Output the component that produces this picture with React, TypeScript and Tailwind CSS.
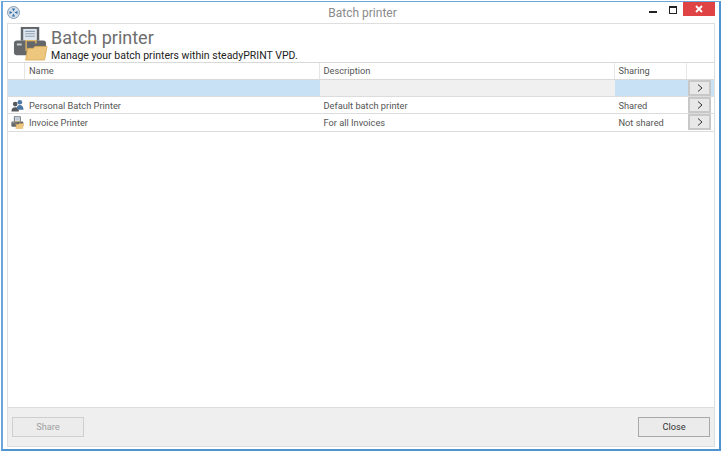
import React from "react";

const font = "font-['Roboto','Noto_Sans',sans-serif]";

/* Big printer + folder icon from the header */
function PrinterFolder({ size }: { size: number }) {
    return (
        <svg width={size} height={size} viewBox="0 0 36 36" fill="none">
            <rect x="8" y="1" width="19" height="14" fill="#5f6468" />
            <rect x="10.5" y="3" width="14" height="12" fill="#dfe6ee" />
            <path d="M12.500 5.500h10M12.500 8h10M12.500 10.500h10" stroke="#8fa3b8" strokeWidth="1.200" />
            <path d="M4 15h27a3 3 0 0 1 3 3v9a3 3 0 0 1-3 3H4a3 3 0 0 1-3-3v-9a3 3 0 0 1 3-3z" fill="#63676a" />
            <rect x="4" y="18" width="5" height="2" fill="#c9ccce" />
            <path d="M13.500 26V15h10v3" stroke="#e3b667" strokeWidth="1.400" />
            <path d="M13 35l2-12h6l1.500-2H35l-2.500 14z" fill="#eec77e" stroke="#d9a855" strokeWidth="0.800" />
        </svg>
    );
}

function UsersIcon() {
    return (
        <svg width="13" height="13" viewBox="0 0 14 13" fill="none">
            <circle cx="4.500" cy="5" r="2.500" fill="#55595d" />
            <path d="M0.500 13c0-3 1.500-4.500 4-4.500s4 1.500 4 4.500z" fill="#55595d" />
            <circle cx="9.500" cy="3" r="2.500" fill="#4a76a3" />
            <path d="M6 9.500c0.500-2.500 1.800-3.500 3.500-3.500s3.500 1 4 5H8.500z" fill="#4a76a3" />
        </svg>
    );
}

function RowArrow() {
    return (
        <button className="ml-px w-[23px] h-[16px] bg-[#e8e8e8] border-2 border-[#c8c8c8] flex items-center justify-center">
            <svg width="6" height="8" viewBox="0 0 6 8" fill="none">
                <path d="M1 0.500L5 4L1 7.500" stroke="#333333" strokeWidth="1" />
            </svg>
        </button>
    );
}

const rows = [
    { name: "Personal Batch Printer", description: "Default batch printer", sharing: "Shared", icon: <UsersIcon /> },
    { name: "Invoice Printer", description: "For all Invoices", sharing: "Not shared", icon: <PrinterFolder size={13} /> },
];

export default function App() {
    return (
        <div className={`w-[723px] h-[452px] bg-white overflow-hidden ${font}`}>
            <div className="ml-px mt-px w-[720px] h-[450px] border-2 border-t-[1.500px] border-[#6aa6dc] border-r-[#4e94d2] border-b-[#4e94d2] bg-white flex flex-col">
                {/* Title bar */}
                <div className="h-[21px] shrink-0 flex items-center">
                    <svg className="ml-[4px]" width="13" height="13" viewBox="0 0 13 13" fill="none">
                        <circle cx="6.500" cy="6.500" r="6" fill="#d5e0ea" stroke="#6f8aa5" strokeWidth="0.800" />
                        <path d="M5 2.500h3L6.500 5.500zM5 10.500h3L6.500 7.500zM2.500 5v3l3-1.500zM10.500 5v3l-3-1.500z" fill="#2d6ca8" />
                    </svg>
                    <span className="flex-1 text-center text-[12px] text-[#8a8a8a] pl-[56px]">Batch printer</span>
                    <div className="flex items-start self-start h-[17px] pr-[4px]">
                        <div className="w-[8px] h-[2px] bg-[#222] mt-[9px] mr-[12px]" />
                        <div className="w-[8px] h-[8px] border border-[#222] border-t-2 mt-[4px] mr-[6px]" />
                        <div className="w-[32px] h-[14px] bg-[#e04343] flex items-center justify-center">
                            <svg width="8" height="8" viewBox="0 0 8 8" fill="none">
                                <path d="M1 1l6 6M7 1l-6 6" stroke="#ffffff" strokeWidth="1.800" />
                            </svg>
                        </div>
                    </div>
                </div>

                {/* Dialog body */}
                <div className="ml-[4px] mb-[2px] w-[708px] flex-1 min-h-0 border border-[#dedede] flex flex-col">
                    {/* Header */}
                    <div className="h-[38px] shrink-0 flex items-center pl-[5px] gap-[1px]">
                        <div className="w-[37px] shrink-0">
                            <PrinterFolder size={35} />
                        </div>
                        <div className="flex flex-col gap-[2px] pt-[3px]">
                            <span className="text-[18px] leading-[19px] text-[#6e6e6e]">Batch printer</span>
                            <span className="text-[10.500px] leading-[13px] text-[#222]">Manage your batch printers within steadyPRINT VPD.</span>
                        </div>
                    </div>

                    {/* Column headers */}
                    <div className="h-[18px] shrink-0 flex border-y border-[#d9d9d9] text-[9.250px] text-[#555] leading-[16px]">
                        <div className="w-[17px] border-r border-[#e6e6e6]" />
                        <div className="w-[295px] border-r border-[#e6e6e6] pl-[4px]">Name</div>
                        <div className="w-[295px] border-r border-[#e6e6e6] pl-[3.500px]">Description</div>
                        <div className="w-[72px] border-r border-[#e6e6e6] pl-[3.500px]">Sharing</div>
                    </div>

                    {/* Filter row */}
                    <div className="h-[17px] shrink-0 flex items-center border-b border-[#dcdcdc] bg-[#c9e1f5]">
                        <div className="w-[312px] h-full" />
                        <div className="w-[295px] h-full bg-[#f0f0f0]" />
                        <div className="w-[72px] h-full" />
                        <RowArrow />
                    </div>

                    {/* Rows */}
                    {rows.map((row) => (
                        <div key={row.name} className="h-[17.330px] shrink-0 flex items-center border-b border-[#dcdcdc] text-[9.250px] text-[#555]">
                            <div className="w-[17px] flex justify-center pl-px">{row.icon}</div>
                            <div className="w-[295px] pl-[4px] pt-px">{row.name}</div>
                            <div className="w-[295px] pl-[3.500px] pt-px">{row.description}</div>
                            <div className="w-[72px] pl-[3.500px] pt-px">{row.sharing}</div>
                            <RowArrow />
                        </div>
                    ))}

                    <div className="flex-1" />

                    {/* Footer */}
                    <div className="h-[39px] shrink-0 bg-[#efefef] border-t border-[#dcdcdc] flex items-center justify-between px-[4px]">
                        <button className="w-[72px] h-[20px] border border-[#cfcfcf] bg-[#ececec] text-[9.250px] text-[#a0a0a0]">Share</button>
                        <button className="w-[72px] h-[20px] border border-[#a8a8a8] bg-[#ebebeb] text-[9.250px] text-[#333]">Close</button>
                    </div>
                </div>
            </div>
        </div>
    );
}
